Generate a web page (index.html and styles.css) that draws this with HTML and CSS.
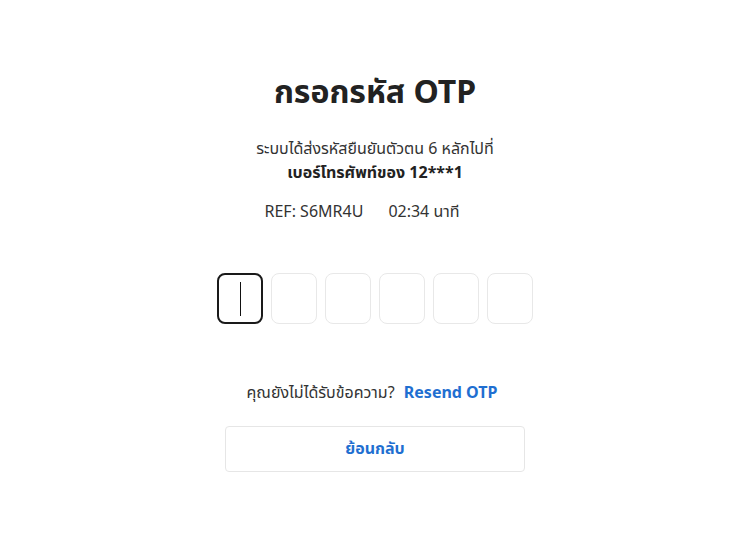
FILE: index.html
```html
<!DOCTYPE html>
<html lang="th">
<head>
<meta charset="utf-8">
<title>OTP</title>
<link rel="stylesheet" href="styles.css">
</head>
<body>
<main class="page">
  <h1 class="title">กรอกรหัส OTP</h1>
  <p class="desc"><span class="line">ระบบได้ส่งรหัสยืนยันตัวตน 6 หลักไปที่</span><strong class="line">เบอร์โทรศัพท์ของ 12***1</strong></p>
  <div class="ref"><span>REF: S6MR4U</span><span>02:34 นาที</span></div>
  <div class="otp">
    <div class="box active"><span class="caret"></span></div>
    <div class="box"></div>
    <div class="box"></div>
    <div class="box"></div>
    <div class="box"></div>
    <div class="box"></div>
  </div>
  <p class="resend">คุณยังไม่ได้รับข้อความ? <a class="link" href="#">Resend OTP</a></p>
  <button class="back">ย้อนกลับ</button>
</main>
</body>
</html>
```
FILE: styles.css
```css
html, body {
  margin: 0;
  padding: 0;
  background: #fff;
}
body {
  font-family: "Noto Sans", "Noto Sans Thai", "DejaVu Sans", sans-serif;
  color: #222;
}
.page {
  display: flex;
  flex-direction: column;
  align-items: center;
  padding-top: 67px;
  padding-left: 3px;
}
.title {
  margin: 0;
  font-size: 32px;
  font-weight: 700;
  line-height: 48px;
  color: #222;
}
.desc {
  margin: 21px 0 0;
  display: flex;
  flex-direction: column;
  align-items: center;
  font-size: 16px;
  line-height: 24px;
  text-align: center;
  color: #333;
}
.desc strong {
  font-size: 16px;
  font-weight: 700;
  color: #222;
}
.ref {
  margin-top: 15px;
  padding-right: 26px;
  display: flex;
  gap: 25px;
  font-size: 16px;
  line-height: 24px;
  color: #333;
}
.otp {
  margin-top: 50px;
  display: flex;
  gap: 8px;
}
.box {
  width: 46px;
  height: 51px;
  box-sizing: border-box;
  border: 1px solid #e8e8e8;
  border-radius: 8px;
  display: flex;
  align-items: center;
  justify-content: center;
}
.box.active {
  border: 2px solid #1a1a1a;
}
.caret {
  width: 1px;
  height: 34px;
  background: #111;
}
.resend {
  margin: 56px 6px 0 0;
  font-size: 16px;
  line-height: 24px;
  color: #333;
}
.link {
  color: #1f6fd1;
  font-weight: 700;
  text-decoration: none;
  margin-left: 5px;
}
.back {
  margin-top: 22px;
  width: 300px;
  height: 46px;
  background: #fff;
  border: 1px solid #e6e6e6;
  border-radius: 4px;
  font-family: inherit;
  font-size: 16px;
  font-weight: 700;
  color: #1f6fd1;
}
```
